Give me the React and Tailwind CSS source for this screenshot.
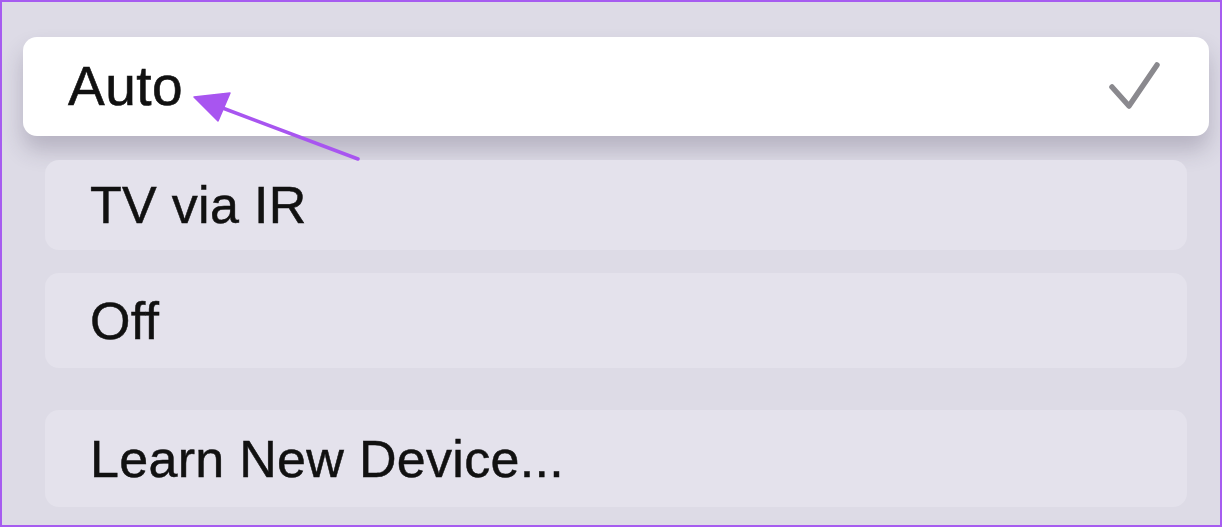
const rows = [
  { label: "TV via IR", className: "mt-[24px] h-[90px]" },
  { label: "Off", className: "mt-[23px] h-[95px]" },
  { label: "Learn New Device...", className: "mt-[42px] h-[97px]" },
];

export default function App() {
  return (
    <div
      className="relative w-[1222px] h-[527px] overflow-hidden border-2 border-[#a65cf0] bg-[#dddbe6]"
      style={{ fontFamily: '"Liberation Sans", Arial, sans-serif' }}
    >
      <div className="flex flex-col pt-[35px]">
        {/* focused item */}
        <div className="ml-[21px] w-[1186px] h-[99px] flex items-center justify-between rounded-[14px] bg-white pl-[45px] pr-[48px] shadow-[0_14px_22px_rgba(60,50,80,0.24)]">
          <span className="text-[55px] leading-none text-[#111] tracking-[0.5px] [-webkit-text-stroke:0.6px_#111]">Auto</span>
          <svg width="52" height="50" viewBox="0 0 52 50" fill="none">
            <path
              d="M3 25 L20 44 L48 3"
              stroke="#8a898e"
              strokeWidth="5.5"
              strokeLinecap="round"
              strokeLinejoin="round"
            />
          </svg>
        </div>

        {rows.map((row) => (
          <div
            key={row.label}
            className={`ml-[43px] w-[1142px] flex items-center rounded-[14px] bg-[#e4e2ec] pl-[45px] ${row.className}`}
          >
            <span className="text-[52px] leading-none text-[#111] tracking-[0.3px] [-webkit-text-stroke:0.5px_#111]">{row.label}</span>
          </div>
        ))}
      </div>

      {/* annotation arrow */}
      <svg className="absolute left-0 top-0" width="1222" height="527" viewBox="0 0 1222 527" fill="none">
        <path d="M356 157 L210 102" stroke="#a855f0" strokeWidth="3.5" strokeLinecap="round" />
        <path d="M192 95 L228 91 L216 119 Z" fill="#a855f0" stroke="#a855f0" strokeWidth="1.5" strokeLinejoin="round" />
      </svg>
    </div>
  );
}
